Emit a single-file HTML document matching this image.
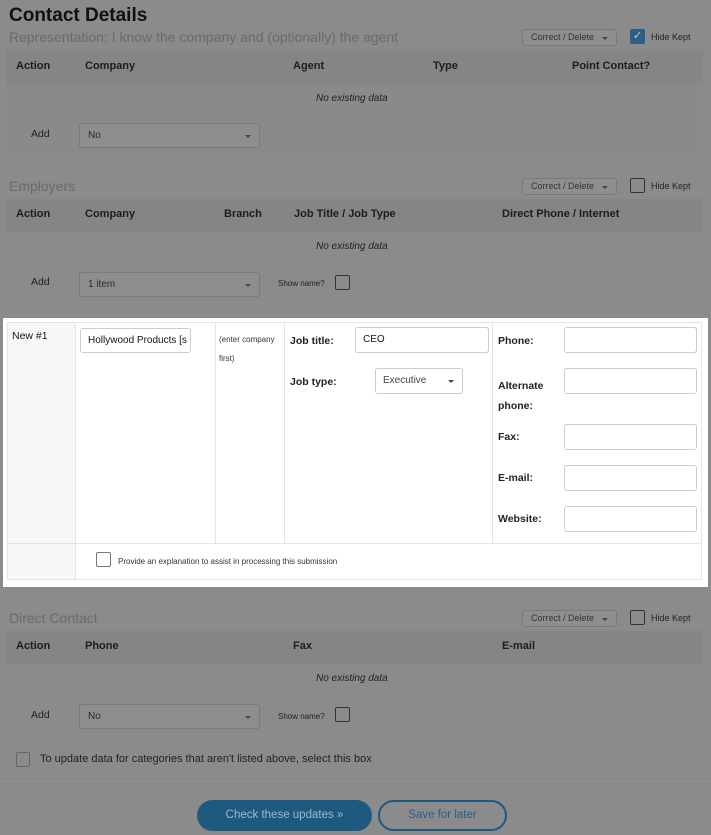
<!DOCTYPE html>
<html><head><meta charset="utf-8"><style>
*{box-sizing:border-box;margin:0;padding:0}
body{width:711px;height:835px;background:#8b8b8b;font-family:"Liberation Sans",sans-serif;position:relative;overflow:hidden;color:#151515}
.a{position:absolute}
.h1{font-size:19px;font-weight:bold;left:9px;top:5px;color:#111}
.sub{font-size:14px;color:#6a6a6a;left:9px}
.band{left:6px;width:697px;background:#858585}
.th{font-size:11px;font-weight:bold;color:#1d1d1d}
.sel{background:#8e8e8e;border:1px solid #7a7a7a;border-radius:3px;font-size:10px;color:#2a2a2a;padding:0 8px}
.cd{left:522px;width:95px;height:17px;line-height:15px;font-size:9px;color:#333}
.cb{width:15px;height:15px;border:1.5px solid #333;border-radius:2px}
.sm{font-size:9px;color:#222}
.inp{border:1px solid #ccc;border-radius:3px;background:#fff;font-size:10px;padding-left:7px}
.lbl{font-size:10.5px;font-weight:bold;color:#222}
.arrow::after{content:"";position:absolute;right:8px;top:50%;margin-top:-1px;border:3px solid transparent;border-top:3px solid #444}
</style></head><body>
<div class="a h1">Contact Details</div>
<div class="a sub" style="top:29px">Representation: I know the company and (optionally) the agent</div>
<div class="a sel cd arrow" style="top:29px">Correct / Delete</div>
<div class="a" style="left:630px;top:29px;width:15px;height:15px;background:#2a5f86;border-radius:2px;color:#ccd;font-size:11px;text-align:center;line-height:15px">✓</div>
<div class="a sm" style="left:651px;top:32px">Hide Kept</div>
<div class="a band" style="top:51px;height:33px"></div>
<div class="a th" style="left:16px;top:60px">Action</div><div class="a th" style="left:85px;top:60px">Company</div><div class="a th" style="left:293px;top:60px">Agent</div><div class="a th" style="left:433px;top:60px">Type</div><div class="a th" style="left:572px;top:60px">Point Contact?</div>
<div class="a" style="left:6px;top:84px;width:697px;height:68px;background:#8a8a8a"></div>
<div class="a" style="left:316px;top:93px;font-size:10px;font-style:italic;color:#222">No existing data</div>
<div class="a" style="left:31px;top:128px;font-size:10.5px;color:#222">Add</div>
<div class="a sel arrow" style="left:79px;top:123px;width:181px;height:25px;line-height:23px">No</div>

<div class="a sub" style="top:178px">Employers</div>
<div class="a sel cd arrow" style="top:178px">Correct / Delete</div>
<div class="a cb" style="left:630px;top:178px"></div>
<div class="a sm" style="left:651px;top:181px">Hide Kept</div>
<div class="a band" style="top:199px;height:33px"></div>
<div class="a th" style="left:16px;top:208px">Action</div><div class="a th" style="left:85px;top:208px">Company</div><div class="a th" style="left:224px;top:208px">Branch</div><div class="a th" style="left:294px;top:208px">Job Title / Job Type</div><div class="a th" style="left:502px;top:208px">Direct Phone / Internet</div>
<div class="a" style="left:316px;top:241px;font-size:10px;font-style:italic;color:#222">No existing data</div>
<div class="a" style="left:31px;top:276px;font-size:10.5px;color:#222">Add</div>
<div class="a sel arrow" style="left:79px;top:272px;width:181px;height:25px;line-height:23px">1 item</div>
<div class="a sm" style="left:278px;top:279px;font-size:8px">Show name?</div>
<div class="a cb" style="left:335px;top:275px"></div>

<div class="a" style="left:3px;top:318px;width:705px;height:269px;background:#fff"></div>
<div class="a" style="left:7px;top:322px;width:695px;height:258px;border:1px solid #e4e4e4"></div>
<div class="a" style="left:8px;top:323px;width:68px;height:256px;background:#f7f7f7;border-right:1px solid #e4e4e4"></div>
<div class="a" style="left:215px;top:323px;width:1px;height:220px;background:#e4e4e4"></div>
<div class="a" style="left:284px;top:323px;width:1px;height:220px;background:#e4e4e4"></div>
<div class="a" style="left:492px;top:323px;width:1px;height:220px;background:#e4e4e4"></div>
<div class="a" style="left:8px;top:543px;width:693px;height:1px;background:#e4e4e4"></div>
<div class="a" style="left:12px;top:330px;font-size:10.5px">New #1</div>
<div class="a inp" style="left:80px;top:328px;width:111px;height:25px;line-height:23px;overflow:hidden;white-space:nowrap;font-size:10px">Hollywood Products [s</div>
<div class="a" style="left:219px;top:330px;font-size:8px;line-height:19px;color:#333">(enter company<br>first)</div>
<div class="a lbl" style="left:290px;top:335px">Job title:</div>
<div class="a inp" style="left:355px;top:327px;width:134px;height:26px;line-height:24px">CEO</div>
<div class="a lbl" style="left:290px;top:376px">Job type:</div>
<div class="a inp arrow" style="left:375px;top:368px;width:88px;height:26px;line-height:24px;color:#444">Executive</div>
<div class="a lbl" style="left:498px;top:335px">Phone:</div>
<div class="a lbl" style="left:498px;top:376px;line-height:20px">Alternate<br>phone:</div>
<div class="a lbl" style="left:498px;top:431px">Fax:</div>
<div class="a lbl" style="left:498px;top:472px">E-mail:</div>
<div class="a lbl" style="left:498px;top:513px">Website:</div>
<div class="a inp" style="left:564px;top:327px;width:133px;height:26px"></div>
<div class="a inp" style="left:564px;top:368px;width:133px;height:26px"></div>
<div class="a inp" style="left:564px;top:424px;width:133px;height:26px"></div>
<div class="a inp" style="left:564px;top:465px;width:133px;height:26px"></div>
<div class="a inp" style="left:564px;top:506px;width:133px;height:26px"></div>
<div class="a" style="left:96px;top:552px;width:15px;height:15px;border:1px solid #777;border-radius:2px"></div>
<div class="a" style="left:118px;top:557px;font-size:8px;color:#333">Provide an explanation to assist in processing this submission</div>

<div class="a sub" style="top:610px">Direct Contact</div>
<div class="a sel cd arrow" style="top:610px">Correct / Delete</div>
<div class="a cb" style="left:630px;top:610px"></div>
<div class="a sm" style="left:651px;top:613px">Hide Kept</div>
<div class="a band" style="top:631px;height:33px"></div>
<div class="a th" style="left:16px;top:640px">Action</div><div class="a th" style="left:85px;top:640px">Phone</div><div class="a th" style="left:293px;top:640px">Fax</div><div class="a th" style="left:502px;top:640px">E-mail</div>
<div class="a" style="left:316px;top:673px;font-size:10px;font-style:italic;color:#222">No existing data</div>
<div class="a" style="left:31px;top:709px;font-size:10.5px;color:#222">Add</div>
<div class="a sel arrow" style="left:79px;top:704px;width:181px;height:25px;line-height:23px">No</div>
<div class="a sm" style="left:278px;top:712px;font-size:8px">Show name?</div>
<div class="a cb" style="left:335px;top:707px"></div>
<div class="a" style="left:16px;top:752px;width:14px;height:15px;border:1px solid #666;border-radius:2px"></div>
<div class="a" style="left:40px;top:753px;font-size:11px;color:#222">To update data for categories that aren't listed above, select this box</div>
<div class="a" style="left:0;top:778px;width:711px;height:1px;background:#858585"></div>
<div class="a" style="left:197px;top:800px;width:175px;height:31px;border-radius:16px;background:#1e5a80;color:#9fb8cc;font-size:11.5px;text-align:center;line-height:31px">Check these updates »</div>
<div class="a" style="left:378px;top:800px;width:129px;height:31px;border-radius:16px;border:2px solid #1e5a80;color:#2a5f86;font-size:11.5px;text-align:center;line-height:27px">Save for later</div>
</body></html>
